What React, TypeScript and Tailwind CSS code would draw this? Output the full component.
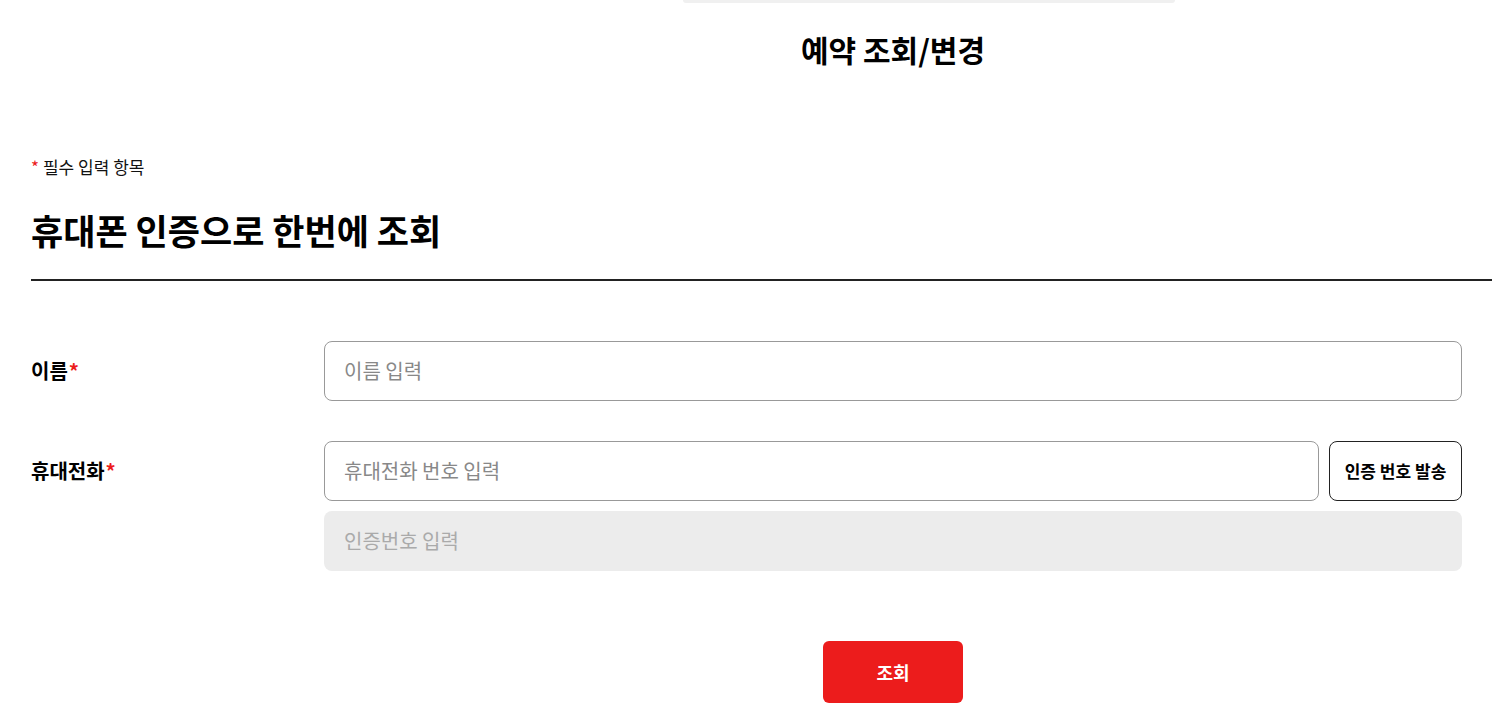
export default function App() {
  return (
    <div
      className="w-[1492px] h-[721px] overflow-hidden bg-white text-[#111]"
      style={{ fontFamily: '"Noto Sans CJK KR", "Noto Sans", sans-serif' }}
    >
      <div className="ml-[31px] w-[1724px]">
        {/* bottom edge of the tab strip above */}
        <div className="ml-[652px] h-[3px] w-[492px] rounded-b-[10px] bg-[#f0f0f0]" />

        <h1 className="mt-[26px] text-center text-[30px] font-bold leading-[40px] text-black">
          예약 조회/변경
        </h1>

        <p className="mt-[87px] text-[17px] leading-[22px] text-[#111]">
          <span className="mr-[4px] text-[17px] text-[#ec1c1c]">*</span>
          필수 입력 항목
        </p>

        <h2 className="mt-[27px] text-[35px] font-bold leading-[50px] text-black">
          휴대폰 인증으로 한번에 조회
        </h2>

        <div className="mt-[24px] h-[2px] bg-[#222]" />

        <div className="mt-[60px] w-[1431px]">
          <div className="flex">
            <label className="flex h-[60px] w-[293px] shrink-0 items-center text-[20px] font-bold text-black">
              이름<span className="ml-[1px] text-[#ec1c1c]">*</span>
            </label>
            <div className="flex h-[60px] flex-1 items-center rounded-[8px] border border-[#999] px-[19px] text-[20px] text-[#888]">
              이름 입력
            </div>
          </div>

          <div className="mt-[40px] flex">
            <label className="flex h-[60px] w-[293px] shrink-0 items-center text-[20px] font-bold text-black">
              휴대전화<span className="ml-[1px] text-[#ec1c1c]">*</span>
            </label>
            <div className="flex flex-1 flex-col gap-[10px]">
              <div className="flex gap-[10px]">
                <div className="flex h-[60px] flex-1 items-center rounded-[8px] border border-[#999] px-[19px] text-[20px] text-[#888]">
                  휴대전화 번호 입력
                </div>
                <button className="h-[60px] w-[133px] rounded-[8px] border border-[#222] bg-white text-[17px] font-bold text-black">
                  인증 번호 발송
                </button>
              </div>
              <div className="flex h-[60px] items-center rounded-[8px] bg-[#ececec] px-[20px] text-[20px] text-[#aaa]">
                인증번호 입력
              </div>
            </div>
          </div>
        </div>

        <div className="mt-[70px] flex justify-center">
          <button className="h-[62px] w-[140px] rounded-[6px] bg-[#ec1c1c] text-[18px] font-bold text-white">
            조회
          </button>
        </div>
      </div>
    </div>
  );
}
